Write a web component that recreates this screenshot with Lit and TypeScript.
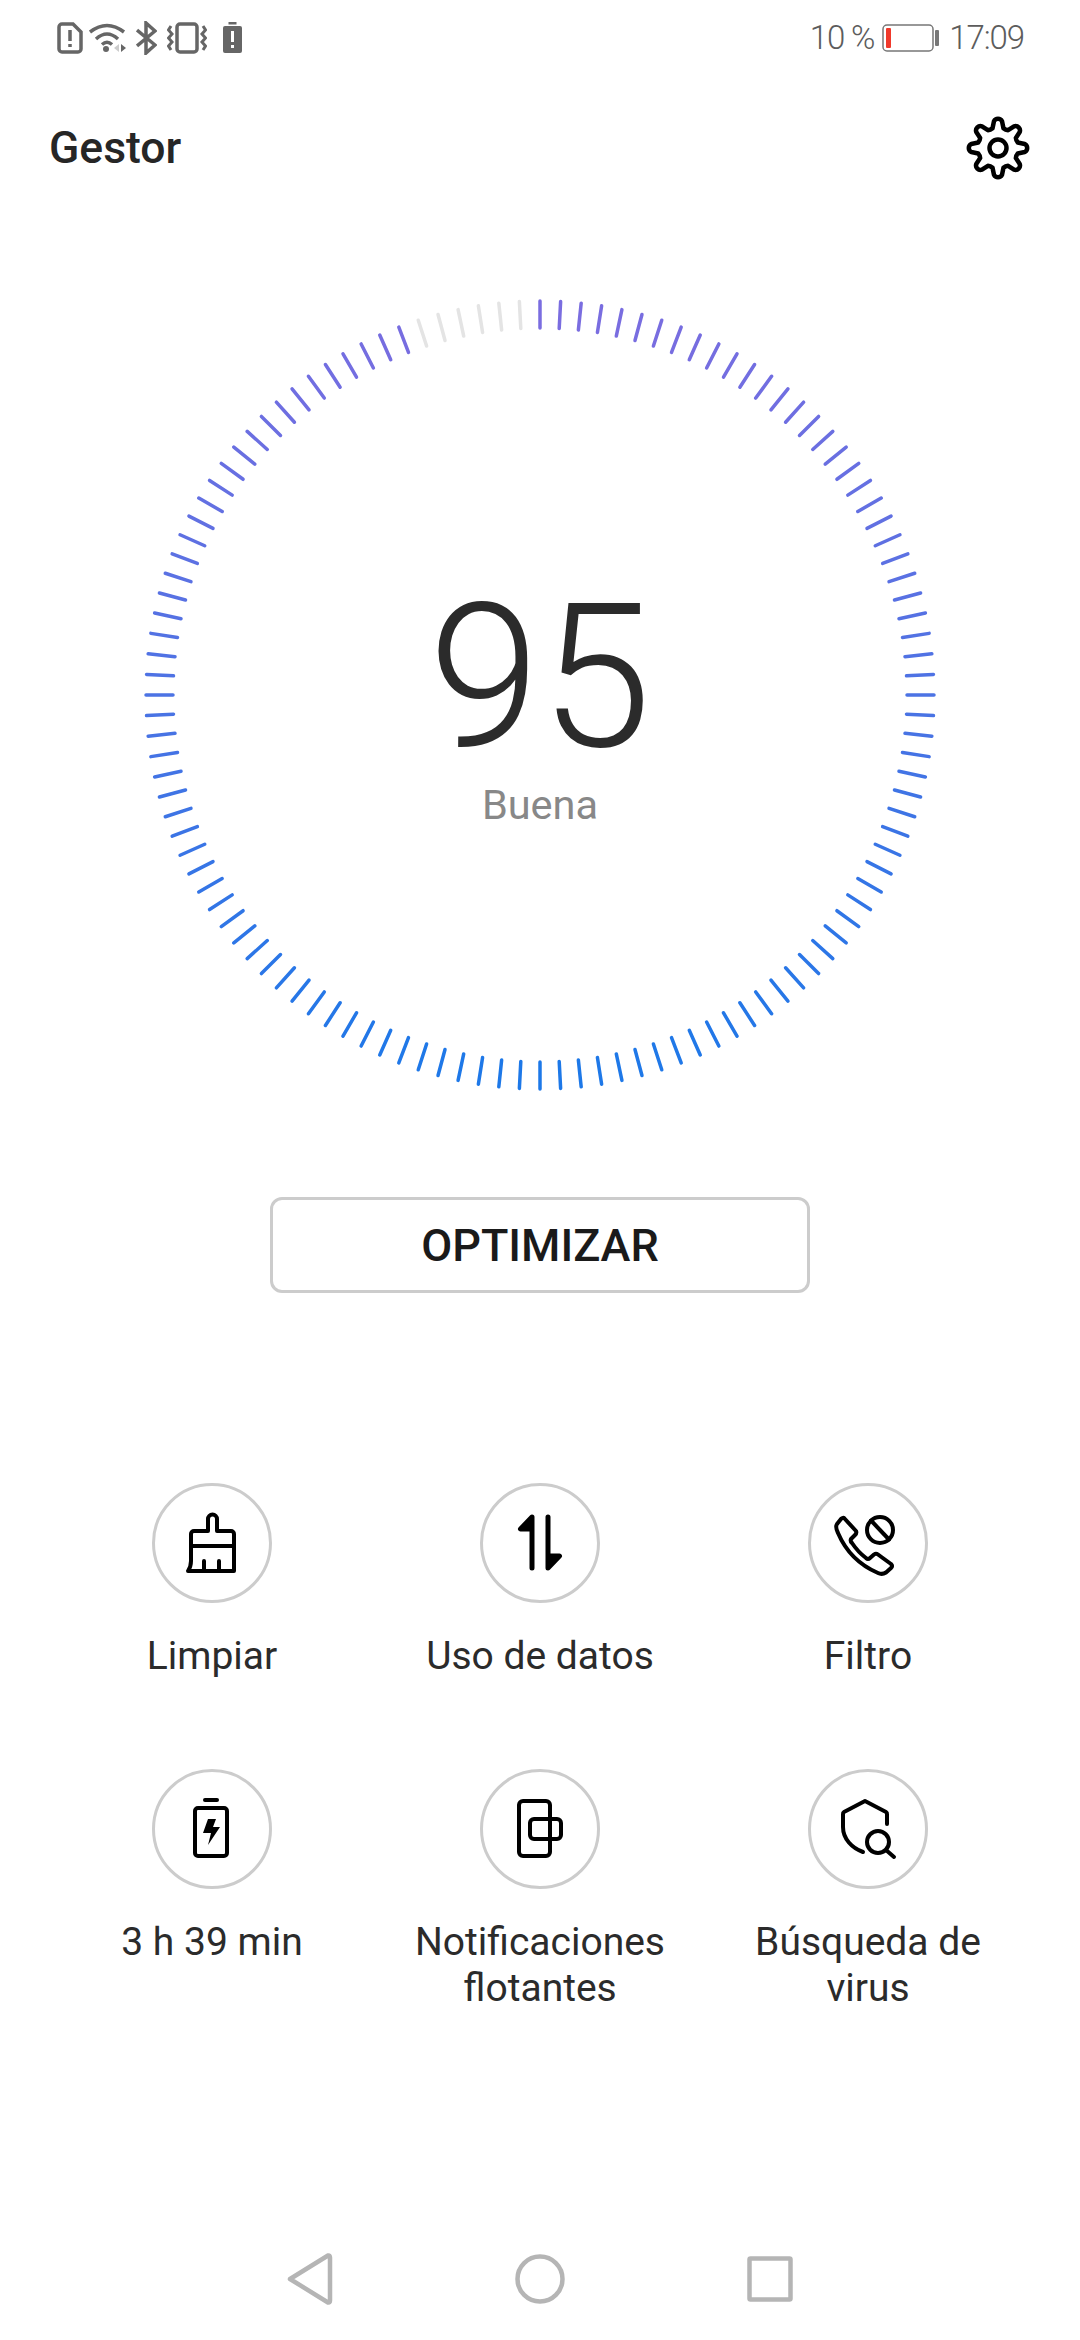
import { LitElement, html, css, svg } from 'lit';
import { customElement } from 'lit/decorators.js';

// tick colour goes from violet at the top of the dial to blue at the bottom
function tickColor(t: number) {
  const r = Math.round(122 + (29 - 122) * t);
  const g = Math.round(109 + (120 - 109) * t);
  const b = Math.round(224 + (232 - 224) * t);
  return `rgb(${r},${g},${b})`;
}

function gearPath() {
  const cx = 32, cy = 32, inner = 20.5, outer = 27;
  const pt = (r: number, a: number) =>
    `${(cx + r * Math.sin(a)).toFixed(2)} ${(cy - r * Math.cos(a)).toFixed(2)}`;
  let d = '';
  for (let i = 0; i < 8; i++) {
    const a = (i * Math.PI) / 4;
    d += `${i === 0 ? 'M' : 'L'}${pt(inner, a - 0.27)} `;
    d += `L${pt(outer, a - 0.15)} `;
    d += `A4.5 4.5 0 0 1 ${pt(outer, a + 0.15)} `;
    d += `L${pt(inner, a + 0.27)} `;
    d += `Q${pt(inner - 1, a + Math.PI / 8)} ${pt(inner, a + Math.PI / 4 - 0.27)} `;
  }
  return d + 'Z';
}

const tools = [
  {
    label: 'Limpiar',
    icon: svg`<path d="M56 48V36a4.5 4.5 0 0 1 9 0V48H79a3 3 0 0 1 3 3V88H36c2-3 3-6 3-10V51a3 3 0 0 1 3-3Z"/><path d="M39 63H82M52 87V78M67 87V78"/>`,
  },
  {
    label: 'Uso de datos',
    icon: svg`<path d="M52 85V34L40.5 46H52" class="fat"/><path d="M68 34V85L79.5 73H68" class="fat"/>`,
  },
  {
    label: 'Filtro',
    icon: svg`<path d="M36.5 35.5L48 48Q49 50 47 52L43 56Q42 58 44 60Q50 69 58 75Q60 77 62 75L66 71.5Q68 70 70 71.5L83 81Q85 83 83 85L78 89.5Q74 92 70 90Q42 78 30 50Q27 44 29 41L33 36Q35 34 36.5 35.5Z"/><circle cx="72" cy="47" r="13"/><path d="M63 37.5L81 56.5"/>`,
  },
  {
    label: '3 h 39 min',
    icon: svg`<path d="M53 31H65"/><rect x="43" y="39" width="32" height="48" rx="3"/><path class="solid" d="M56 50H64L61 58H68L56 76L59 64H51Z"/>`,
  },
  {
    label: 'Notificaciones flotantes',
    icon: svg`<rect x="39" y="32" width="31" height="55" rx="4"/><rect x="50" y="50" width="31" height="20" rx="4"/>`,
  },
  {
    label: 'Búsqueda de virus',
    icon: svg`<path d="M79 55V45a2 2 0 0 0-1-2L57 32 36 43a2 2 0 0 0-1 2V58C35 70 44 79 55 83"/><circle cx="70" cy="73" r="11"/><path d="M78 81L86 88"/>`,
  },
];

@customElement('app-root')
export class AppRoot extends LitElement {
  static styles = css`
    :host {
      display: block;
      background: #fff;
      font-family: Roboto, 'Noto Sans', sans-serif;
    }
    .page {
      display: flex;
      flex-direction: column;
      min-height: 2340px;
    }
    .status {
      height: 76px;
      display: flex;
      align-items: center;
      justify-content: space-between;
      padding: 0 56px 0 57px;
      color: #5c5c5c;
    }
    .status-left,
    .status-right {
      display: flex;
      align-items: center;
    }
    .status-left svg {
      display: block;
      fill: none;
      stroke: #666;
      stroke-width: 3.5;
    }
    .status-left .sim { margin-right: 6px; }
    .status-left .wifi { margin-right: 9px; }
    .status-left .bt { margin-right: 10px; }
    .status-left .vib { margin-right: 16px; }
    .status-text {
      font-size: 33px;
      font-weight: 300;
      letter-spacing: -1.1px;
      line-height: 40px;
    }
    .percent { margin-right: 8px; }
    .batt { display: block; margin-right: 10px; }
    .header {
      height: 144px;
      display: flex;
      align-items: center;
      justify-content: space-between;
      padding: 0 50px 0 49px;
    }
    .title {
      font-size: 44.5px;
      font-weight: 500;
      color: #262626;
    }
    .gear {
      display: block;
      fill: none;
      stroke: #000;
      stroke-width: 4.5;
      stroke-linejoin: round;
    }
    .dial {
      display: grid;
      width: 800px;
      height: 800px;
      margin: 75px auto 0;
    }
    .dial > * {
      grid-area: 1 / 1;
    }
    .ticks line {
      stroke-width: 3.5;
      stroke-linecap: round;
    }
    .score {
      display: flex;
      flex-direction: column;
      align-items: center;
      padding-top: 298px;
    }
    .value {
      font-size: 201px;
      font-weight: 300;
      line-height: 170px;
      color: #2b2b2b;
    }
    .grade {
      font-size: 41.5px;
      line-height: 46px;
      color: #888;
      margin-top: 19px;
    }
    .optimize {
      display: flex;
      align-items: center;
      justify-content: center;
      box-sizing: border-box;
      width: 540px;
      height: 96px;
      margin: 102px auto 0;
      border: 3px solid #ccc;
      border-radius: 12px;
      background: #fff;
      font: 500 45px Roboto, sans-serif;
      color: #1a1a1a;
    }
    .tools {
      display: grid;
      grid-template-columns: repeat(3, 1fr);
      row-gap: 90px;
      padding: 0 48px;
      margin-top: 190px;
    }
    .tool {
      display: flex;
      flex-direction: column;
      align-items: center;
      text-align: center;
    }
    .ring {
      box-sizing: border-box;
      width: 120px;
      height: 120px;
      border: 3px solid #ccc;
      border-radius: 50%;
    }
    .ring svg {
      display: block;
      margin: -3px;
      fill: none;
      stroke: #000;
      stroke-width: 4;
      stroke-linecap: round;
      stroke-linejoin: round;
    }
    .ring .fat { stroke-width: 5; fill: #000; }
    .ring .solid { fill: #000; stroke: none; }
    .label {
      margin-top: 30px;
      width: 280px;
      font-size: 39px;
      line-height: 46px;
      color: #2b2b2b;
    }
    .nav {
      margin-top: auto;
      height: 122px;
      display: flex;
      align-items: center;
      justify-content: center;
      gap: 182px;
    }
    .nav svg {
      display: block;
      fill: none;
      stroke: #b5b5b5;
      stroke-width: 4.5;
      stroke-linejoin: round;
    }
  `;

  renderTicks() {
    const out = [];
    for (let i = 0; i < 120; i++) {
      const a = (i * 3 * Math.PI) / 180;
      const s = Math.sin(a), c = Math.cos(a);
      const color = i >= 114 ? '#e4e4e4' : tickColor((1 - c) / 2);
      out.push(svg`<line x1=${400 + 367 * s} y1=${400 - 367 * c} x2=${400 + 394 * s} y2=${400 - 394 * c} style="stroke:${color}"></line>`);
    }
    return out;
  }

  render() {
    return html`
      <div class="page">
        <div class="status">
          <div class="status-left">
            <svg class="sim" width="26" height="32" viewBox="0 0 26 32">
              <path d="M5 2H16L24 10V27a3 3 0 0 1-3 3H5a3 3 0 0 1-3-3V5a3 3 0 0 1 3-3Z"/>
              <path d="M13 8V19M13 22V25"/>
            </svg>
            <svg class="wifi" width="38" height="30" viewBox="0 0 38 30">
              <path d="M1 9Q18-4 35 9M7 16Q18 6 29 16M13 21.500Q18 17 23 21.500"/>
              <circle cx="17" cy="26" r="3" style="fill:#666;stroke:none"/>
              <path d="M30 21V29L25 25Z" style="fill:#ccc;stroke:none"/>
              <path d="M32 21V29L37 25Z" style="fill:#666;stroke:none"/>
            </svg>
            <svg class="bt" width="21" height="34" viewBox="0 0 21 34">
              <path d="M1 9L19 24L10 32V2L19 10L1 25"/>
            </svg>
            <svg class="vib" width="40" height="32" viewBox="0 0 40 32">
              <rect x="10" y="2" width="20" height="28" rx="3"/>
              <path d="M4 4L1.500 8L5 12L1.500 16L5 20L1.500 24L4 28M36 4L38.500 8L35 12L38.500 16L35 20L38.500 24L36 28" style="stroke-width:3"/>
            </svg>
            <svg width="19" height="32" viewBox="0 0 19 32" style="stroke:none">
              <rect x="5.500" y="0" width="8" height="2.500" style="fill:#666;stroke:none"/>
              <rect x="0" y="4" width="19" height="27" rx="2" style="fill:#666;stroke:none"/>
              <rect x="8" y="9" width="3" height="11" style="fill:#fff;stroke:none"/>
              <rect x="8" y="23" width="3" height="3" style="fill:#fff;stroke:none"/>
            </svg>
          </div>
          <div class="status-right">
            <span class="status-text percent">10 %</span>
            <svg class="batt" width="57" height="28" viewBox="0 0 57 28">
              <rect x="1" y="1" width="50" height="26" rx="4" fill="none" stroke="#777" stroke-width="1.500"/>
              <rect x="4" y="4" width="5" height="20" rx="1" fill="#f0392b"/>
              <rect x="53" y="6" width="4" height="16" rx="1" fill="#777"/>
            </svg>
            <span class="status-text">17:09</span>
          </div>
        </div>

        <div class="header">
          <div class="title">Gestor</div>
          <svg class="gear" width="64" height="64" viewBox="0 0 64 64">
            <path d=${gearPath()}/>
            <circle cx="32" cy="32" r="8.500"/>
          </svg>
        </div>

        <div class="dial">
          <svg class="ticks" width="800" height="800" viewBox="0 0 800 800">${this.renderTicks()}</svg>
          <div class="score">
            <div class="value">95</div>
            <div class="grade">Buena</div>
          </div>
        </div>

        <button class="optimize">OPTIMIZAR</button>

        <div class="tools">
          ${tools.map(
            (t) => html`
              <div class="tool">
                <div class="ring">
                  <svg width="120" height="120" viewBox="0 0 120 120">${t.icon}</svg>
                </div>
                <div class="label">${t.label}</div>
              </div>
            `
          )}
        </div>

        <div class="nav">
          <svg width="46" height="54" viewBox="0 0 46 54">
            <path d="M3 27L41 3.500Q43 3 43 5.500V48.500Q43 51 41 50.500Z"/>
          </svg>
          <svg width="50" height="50" viewBox="0 0 50 50">
            <circle cx="25" cy="25" r="22.500"/>
          </svg>
          <svg width="46" height="46" viewBox="0 0 46 46">
            <rect x="2.500" y="2.500" width="41" height="41" rx="1"/>
          </svg>
        </div>
      </div>
    `;
  }
}
